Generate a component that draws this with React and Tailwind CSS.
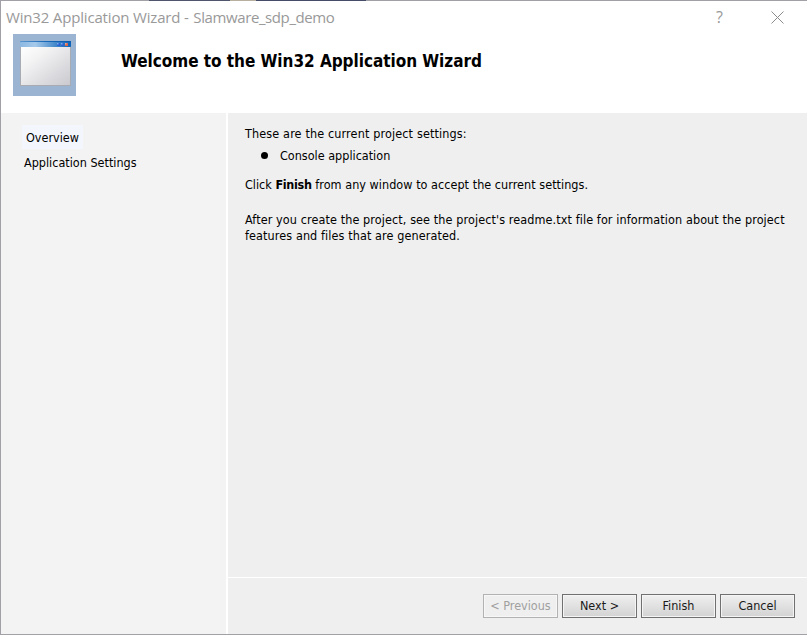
function WindowIcon() {
  return (
    <svg width="63" height="62" viewBox="0 0 63 62" className="shrink-0">
      <defs>
        <linearGradient id="body" x1="0" y1="0" x2="1" y2="1">
          <stop offset="0" stopColor="#ffffff" />
          <stop offset="0.3" stopColor="#f3f3f4" />
          <stop offset="1" stopColor="#c9c9cf" />
        </linearGradient>
        <linearGradient id="bar" x1="0" y1="0" x2="1" y2="0">
          <stop offset="0" stopColor="#8db8e2" />
          <stop offset="0.3" stopColor="#a5c9ea" />
          <stop offset="0.7" stopColor="#4388ca" />
          <stop offset="1" stopColor="#0c62b8" />
        </linearGradient>
        <linearGradient id="edge" x1="0" y1="0" x2="1" y2="0">
          <stop offset="0" stopColor="#5b97d0" />
          <stop offset="0.5" stopColor="#1768b8" />
          <stop offset="1" stopColor="#0a5cb0" />
        </linearGradient>
      </defs>
      <rect width="63" height="62" fill="#9ab4d1" />
      <rect x="7" y="8" width="51" height="44" fill="#a9abb3" />
      <rect x="8" y="13" width="49" height="38" fill="url(#body)" />
      <rect x="7" y="7" width="51" height="6" rx="0.8" fill="url(#bar)" />
      <rect x="7" y="7" width="51" height="1" rx="0.5" fill="url(#edge)" />
      <rect x="44" y="9" width="3" height="3" fill="#2b63d0" />
      <rect x="44" y="9" width="1.5" height="1.5" fill="#7fa9ee" />
      <rect x="48" y="9" width="3" height="3" fill="#2b63d0" />
      <rect x="48" y="9" width="1.5" height="1.5" fill="#7fa9ee" />
      <rect x="52" y="9" width="3" height="3" fill="#d5674f" />
      <rect x="52" y="9" width="1.5" height="1.5" fill="#efa58c" />
    </svg>
  );
}

function WizardButton({ children, disabled }) {
  return (
    <button
      disabled={disabled}
      className={
        "flex h-6 w-[75px] items-center justify-center whitespace-nowrap border pb-px " +
        (disabled
          ? "border-[#b2b2b2] bg-[#efefef] text-[#a0a0a0] shadow-[inset_0_0_0_1px_#f7f7f7]"
          : "border-[#707070] bg-linear-to-b from-[#efefef] to-[#d3d3d3] text-[#1a1a1a] shadow-[inset_0_0_0_1px_#f5f5f5]")
      }
    >
      {children}
    </button>
  );
}

export default function App() {
  return (
    <div className="flex h-[635px] w-[807px] flex-col overflow-hidden border-b border-l border-[#a0a0a6] bg-white font-['DejaVu_Sans_Condensed','DejaVu_Sans',sans-serif] text-[12.5px] leading-4 text-black">
      <div className="flex h-px shrink-0 bg-[#a0a0a6]">
        <div className="ml-[148px] w-[81px] bg-[#4f566b]" />
        <div className="w-[26px] bg-[#b8b09c]" />
        <div className="w-[110px] bg-[#454c67]" />
      </div>
      <header className="h-28 shrink-0">
        <div className="flex h-[33px] items-center pb-0.5 pl-[5px] font-['Open_Sans',sans-serif] text-[15px] text-[#999999]">
          <span className="whitespace-pre tracking-[-0.17px]">
            Win32 Application Wizard <span className="tracking-[0.3px]">- </span>
            <span className="tracking-[-0.4px]">Slamware_sdp_demo</span>
          </span>
          <span className="ml-auto mr-12 text-[16px]">?</span>
          <svg width="13" height="13" viewBox="0 0 13 13" className="mr-[23px] mt-px" stroke="#8c8c8c" strokeWidth="1">
            <path d="M0.5 0.5 L12.5 12.5 M12.5 0.5 L0.5 12.5" />
          </svg>
        </div>
        <div className="flex pl-3">
          <WindowIcon />
          <h1 className="ml-[45px] mt-[15px] whitespace-nowrap text-[17px] leading-6 font-bold tracking-[-0.04px]">
            Welcome to the Win32 Application Wizard
          </h1>
        </div>
      </header>
      <div className="flex min-h-0 flex-1">
        <nav className="flex w-[225px] shrink-0 flex-col items-start bg-[#f3f3f3] pl-[21px] pt-3">
          <div className="flex h-6 w-[61px] items-center whitespace-nowrap bg-[#f3f7fd] pl-1 pt-0.5">Overview</div>
          <div className="mt-1.5 whitespace-nowrap pl-0.5">Application Settings</div>
        </nav>
        <div className="w-0.5 bg-white" />
        <main className="flex flex-1 flex-col bg-[#efefef]">
          <div className="flex-1 whitespace-nowrap pl-[17px] pt-[13px]">
            <p className="tracking-[0.14px]">These are the current project settings:</p>
            <div className="mt-1.5 flex items-center pl-4">
              <span className="mb-0.5 size-[7px] rounded-full bg-black" />
              <span className="ml-3">Console application</span>
            </div>
            <p className="mt-[13px]">
              Click <b className="tracking-[-0.3px]">Finish</b>
              <span className="tracking-[0.04px]"> from any window to accept the current settings.</span>
            </p>
            <p className="mt-[19px] tracking-[0.1px]">
              After you create the project, see the project's readme.txt file for information about the project
              <br />
              features and files that are generated.
            </p>
          </div>
          <div className="flex h-[57px] justify-end gap-1 border-t border-white pr-3 pt-4">
            <WizardButton disabled>&lt; Previous</WizardButton>
            <WizardButton>Next &gt;</WizardButton>
            <WizardButton>Finish</WizardButton>
            <WizardButton>Cancel</WizardButton>
          </div>
        </main>
      </div>
    </div>
  );
}
